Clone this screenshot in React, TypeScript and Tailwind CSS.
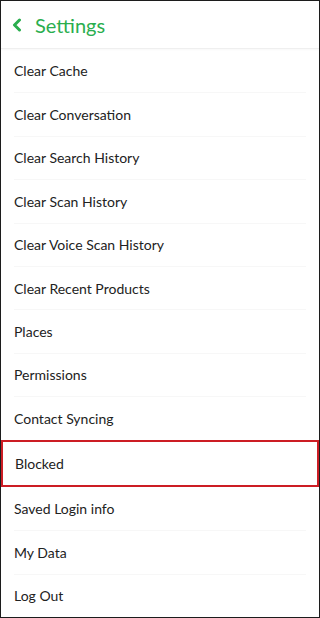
const items = [
  'Clear Cache',
  'Clear Conversation',
  'Clear Search History',
  'Clear Scan History',
  'Clear Voice Scan History',
  'Clear Recent Products',
  'Places',
  'Permissions',
  'Contact Syncing',
  'Blocked',
  'Saved Login info',
  'My Data',
  'Log Out',
];

const App = () => {
  return (
    <div className="w-[320px] h-[618px] border border-[#1c1c1c] bg-white overflow-hidden flex flex-col font-['Lato','Open_Sans',sans-serif]">
      {/* Header */}
      <div className="h-[48px] shrink-0 flex items-center gap-[13px] pl-[11px] border-b border-[#efefef] shadow-[0_1px_2px_rgba(0,0,0,0.03)]">
        <svg width="10" height="14" viewBox="0 0 10 14" fill="none">
          <path d="M7.5 2L2.5 7L7.5 12" stroke="#2aae4e" strokeWidth="3" strokeLinecap="round" strokeLinejoin="round" />
        </svg>
        <span className="text-[20px] text-[#2aae4e] leading-none">Settings</span>
      </div>

      {/* List */}
      <div className="flex-1 flex flex-col">
        {items.map((item, i) =>
          item === 'Blocked' ? (
            <div key={item} className="flex-1 flex items-center px-[12px] border-2 border-[#cc1d24]">
              <span className="text-[14px] text-[#222]">{item}</span>
            </div>
          ) : (
            <div key={item} className="flex-1 flex flex-col">
              {i > 0 && items[i - 1] !== 'Blocked' && <div className="mx-[13px] border-t border-[#f7f7f7]" />}
              <div className="flex-1 flex items-center px-[13px]">
                <span className="text-[14px] text-[#222]">{item}</span>
              </div>
            </div>
          )
        )}
      </div>
    </div>
  );
};

export default App;
